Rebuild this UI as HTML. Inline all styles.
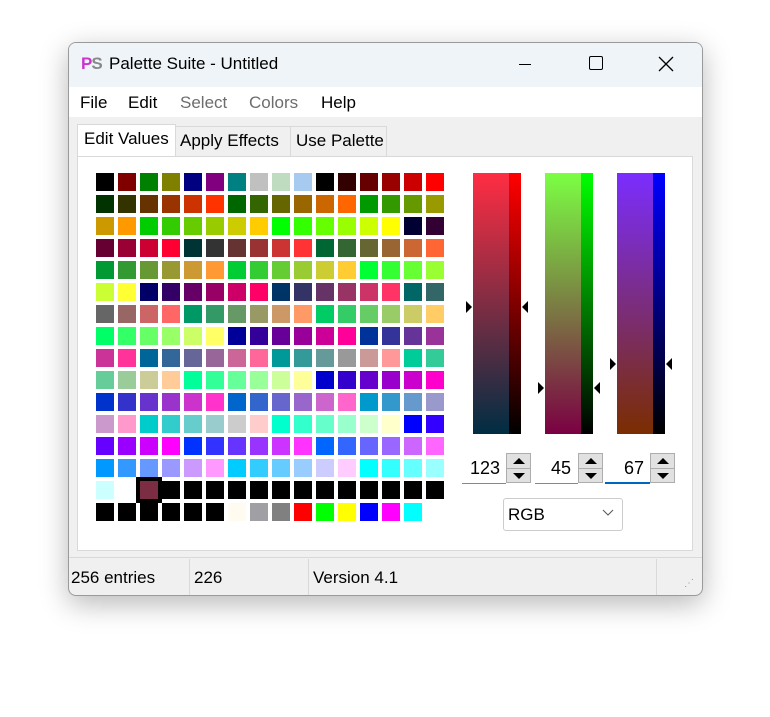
<!DOCTYPE html>
<html><head><style>
body{margin:0;width:770px;height:717px;background:#fff;position:relative;font-family:"Segoe UI","Liberation Sans",sans-serif;overflow:hidden}
.win{position:absolute;left:68px;top:42px;width:633px;height:552px;border:1px solid #9a9a9a;border-radius:8px;background:#f0f0f0;box-shadow:0 8px 28px rgba(0,0,0,.28);overflow:hidden}
.ab{position:absolute}
.t{position:absolute;white-space:nowrap;font-size:17px;color:#000}
.sw{position:absolute;width:18px;height:18px}
.tri{position:absolute;width:0;height:0;border-top:6px solid transparent;border-bottom:6px solid transparent}
.spin{position:absolute;width:25px;height:30px;border:1px solid #adadad;background:#e1e1e1;box-sizing:border-box}
.spin div{height:14px;border-bottom:1px solid #adadad;position:relative}
.up:after{content:"";position:absolute;left:6px;top:4px;border-left:6px solid transparent;border-right:6px solid transparent;border-bottom:6px solid #000}
.dn:after{content:"";position:absolute;left:6px;top:4px;border-left:6px solid transparent;border-right:6px solid transparent;border-top:6px solid #000}
</style></head><body>
<div class="win">
 <div class="ab" style="left:0;top:0;width:633px;height:44px;background:#eef4f8"></div>
 <div class="t" style="left:12px;top:11px;font-weight:bold;font-size:17px;color:#3a3;letter-spacing:-1px"><span style="color:#c3c">P</span><span style="color:#888">S</span></div>
 <div class="t" style="left:40px;top:11px">Palette Suite - Untitled</div>
 <div class="ab" style="left:450px;top:21px;width:12px;height:1px;background:#000"></div>
 <div class="ab" style="left:520px;top:13px;width:12px;height:12px;border:1.5px solid #000;border-radius:2px"></div>
 <svg class="ab" style="left:589px;top:13px" width="16" height="16"><path d="M1 1L15 15M15 1L1 15" stroke="#000" stroke-width="1.3"/></svg>
 <div class="ab" style="left:0;top:44px;width:633px;height:30px;background:#fff"></div>
 <div class="t" style="left:11px;top:50px">File</div>
 <div class="t" style="left:59px;top:50px">Edit</div>
 <div class="t" style="left:111px;top:50px;color:#6d6d6d">Select</div>
 <div class="t" style="left:180px;top:50px;color:#6d6d6d">Colors</div>
 <div class="t" style="left:252px;top:50px">Help</div>
 <div class="ab" style="left:8px;top:81px;width:97px;height:34px;background:#fff;border:1px solid #d9d9d9;border-bottom:none"></div>
 <div class="t" style="left:15px;top:86px">Edit Values</div>
 <div class="ab" style="left:106px;top:83px;width:114px;height:30px;background:#f0f0f0;border:1px solid #d9d9d9"></div>
 <div class="t" style="left:111px;top:88px">Apply Effects</div>
 <div class="ab" style="left:221px;top:83px;width:95px;height:30px;background:#f0f0f0;border:1px solid #d9d9d9"></div>
 <div class="t" style="left:227px;top:88px">Use Palette</div>
 <div class="ab" style="left:8px;top:113px;width:614px;height:393px;background:#fff;border:1px solid #d9d9d9"></div>
 <div class="ab" style="left:0;top:514px;width:633px;height:1px;background:#d9d9d9"></div>
 <div class="t" style="left:2px;top:525px">256 entries</div>
 <div class="ab" style="left:120px;top:516px;width:1px;height:36px;background:#d9d9d9"></div>
 <div class="t" style="left:125px;top:525px">226</div>
 <div class="ab" style="left:239px;top:516px;width:1px;height:36px;background:#d9d9d9"></div>
 <div class="t" style="left:244px;top:525px">Version 4.1</div>
 <div class="ab" style="left:587px;top:516px;width:1px;height:36px;background:#d9d9d9"></div>
</div>
<div id="g"></div>
<div class="ab" style="left:473px;top:173px;width:36px;height:261px;background:linear-gradient(#ff2d43,#002d43)"></div>
<div class="ab" style="left:509px;top:173px;width:12px;height:261px;background:linear-gradient(#f00,#000)"></div>
<div class="ab" style="left:545px;top:173px;width:36px;height:261px;background:linear-gradient(#7bff43,#7b0043)"></div>
<div class="ab" style="left:581px;top:173px;width:12px;height:261px;background:linear-gradient(#0f0,#000)"></div>
<div class="ab" style="left:617px;top:173px;width:36px;height:261px;background:linear-gradient(#7b2dff,#7b2d00)"></div>
<div class="ab" style="left:653px;top:173px;width:12px;height:261px;background:linear-gradient(#00f,#000)"></div>
<div class="tri" style="left:466px;top:301px;border-left:6px solid #000"></div>
<div class="tri" style="left:522px;top:301px;border-right:6px solid #000"></div>
<div class="tri" style="left:538px;top:382px;border-left:6px solid #000"></div>
<div class="tri" style="left:594px;top:382px;border-right:6px solid #000"></div>
<div class="tri" style="left:610px;top:358px;border-left:6px solid #000"></div>
<div class="tri" style="left:666px;top:358px;border-right:6px solid #000"></div>
<div class="ab" style="left:462px;top:453px;width:44px;height:30px;border-bottom:1px solid #888"></div>
<div class="t" style="left:470px;top:458px;font-size:18px">123</div>
<div class="spin" style="left:506px;top:453px"><div class="up"></div><div class="dn" style="border:none"></div></div>
<div class="ab" style="left:535px;top:453px;width:43px;height:30px;border-bottom:1px solid #888"></div>
<div class="t" style="left:551px;top:458px;font-size:18px">45</div>
<div class="spin" style="left:578px;top:453px"><div class="up"></div><div class="dn" style="border:none"></div></div>
<div class="ab" style="left:605px;top:453px;width:45px;height:29px;border-bottom:2px solid #0067c0"></div>
<div class="t" style="left:624px;top:458px;font-size:18px">67</div>
<div class="spin" style="left:650px;top:453px"><div class="up"></div><div class="dn" style="border:none"></div></div>
<div class="ab" style="left:503px;top:498px;width:118px;height:31px;border:1px solid #ccc;border-radius:3px;background:#fff"></div>
<div class="t" style="left:508px;top:505px">RGB</div>
<svg class="ab" style="left:602px;top:509px" width="12" height="8"><path d="M1 1L6 6L11 1" stroke="#555" fill="none"/></svg>
<div class="t" style="left:684px;top:578px;font-size:10px;color:#999">⋰</div>
<script>
var rows=["000000 800000 008000 808000 000080 800080 008080 c0c0c0 c0dcc0 a6caf0 000000 330000 660000 990000 cc0000 ff0000",
"003300 333300 663300 993300 cc3300 ff3300 006600 336600 666600 996600 cc6600 ff6600 009900 339900 669900 999900",
"cc9900 ff9900 00cc00 33cc00 66cc00 99cc00 cccc00 ffcc00 00ff00 33ff00 66ff00 99ff00 ccff00 ffff00 000033 330033",
"660033 990033 cc0033 ff0033 003333 333333 663333 993333 cc3333 ff3333 006633 336633 666633 996633 cc6633 ff6633",
"009933 339933 669933 999933 cc9933 ff9933 00cc33 33cc33 66cc33 99cc33 cccc33 ffcc33 00ff33 33ff33 66ff33 99ff33",
"ccff33 ffff33 000066 330066 660066 990066 cc0066 ff0066 003366 333366 663366 993366 cc3366 ff3366 006666 336666",
"666666 996666 cc6666 ff6666 009966 339966 669966 999966 cc9966 ff9966 00cc66 33cc66 66cc66 99cc66 cccc66 ffcc66",
"00ff66 33ff66 66ff66 99ff66 ccff66 ffff66 000099 330099 660099 990099 cc0099 ff0099 003399 333399 663399 993399",
"cc3399 ff3399 006699 336699 666699 996699 cc6699 ff6699 009999 339999 669999 999999 cc9999 ff9999 00cc99 33cc99",
"66cc99 99cc99 cccc99 ffcc99 00ff99 33ff99 66ff99 99ff99 ccff99 ffff99 0000cc 3300cc 6600cc 9900cc cc00cc ff00cc",
"0033cc 3333cc 6633cc 9933cc cc33cc ff33cc 0066cc 3366cc 6666cc 9966cc cc66cc ff66cc 0099cc 3399cc 6699cc 9999cc",
"cc99cc ff99cc 00cccc 33cccc 66cccc 99cccc cccccc ffcccc 00ffcc 33ffcc 66ffcc 99ffcc ccffcc ffffcc 0000ff 3300ff",
"6600ff 9900ff cc00ff ff00ff 0033ff 3333ff 6633ff 9933ff cc33ff ff33ff 0066ff 3366ff 6666ff 9966ff cc66ff ff66ff",
"0099ff 3399ff 6699ff 9999ff cc99ff ff99ff 00ccff 33ccff 66ccff 99ccff ccccff ffccff 00ffff 33ffff 66ffff 99ffff",
"ccffff ffffff 7b2d43 000000 000000 000000 000000 000000 000000 000000 000000 000000 000000 000000 000000 000000",
"000000 000000 000000 000000 000000 000000 fffbf0 a0a0a4 808080 ff0000 00ff00 ffff00 0000ff ff00ff 00ffff ffffff"];
var h='<div class="ab" style="left:136px;top:477px;width:26px;height:26px;background:#000"></div>';
rows.forEach(function(r,y){r.split(" ").forEach(function(c,x){h+='<div class="sw" style="left:'+(96+x*22)+'px;top:'+(173+y*22)+'px;background:#'+c+'"></div>';});});
document.getElementById("g").innerHTML=h;
</script>
</body></html>
